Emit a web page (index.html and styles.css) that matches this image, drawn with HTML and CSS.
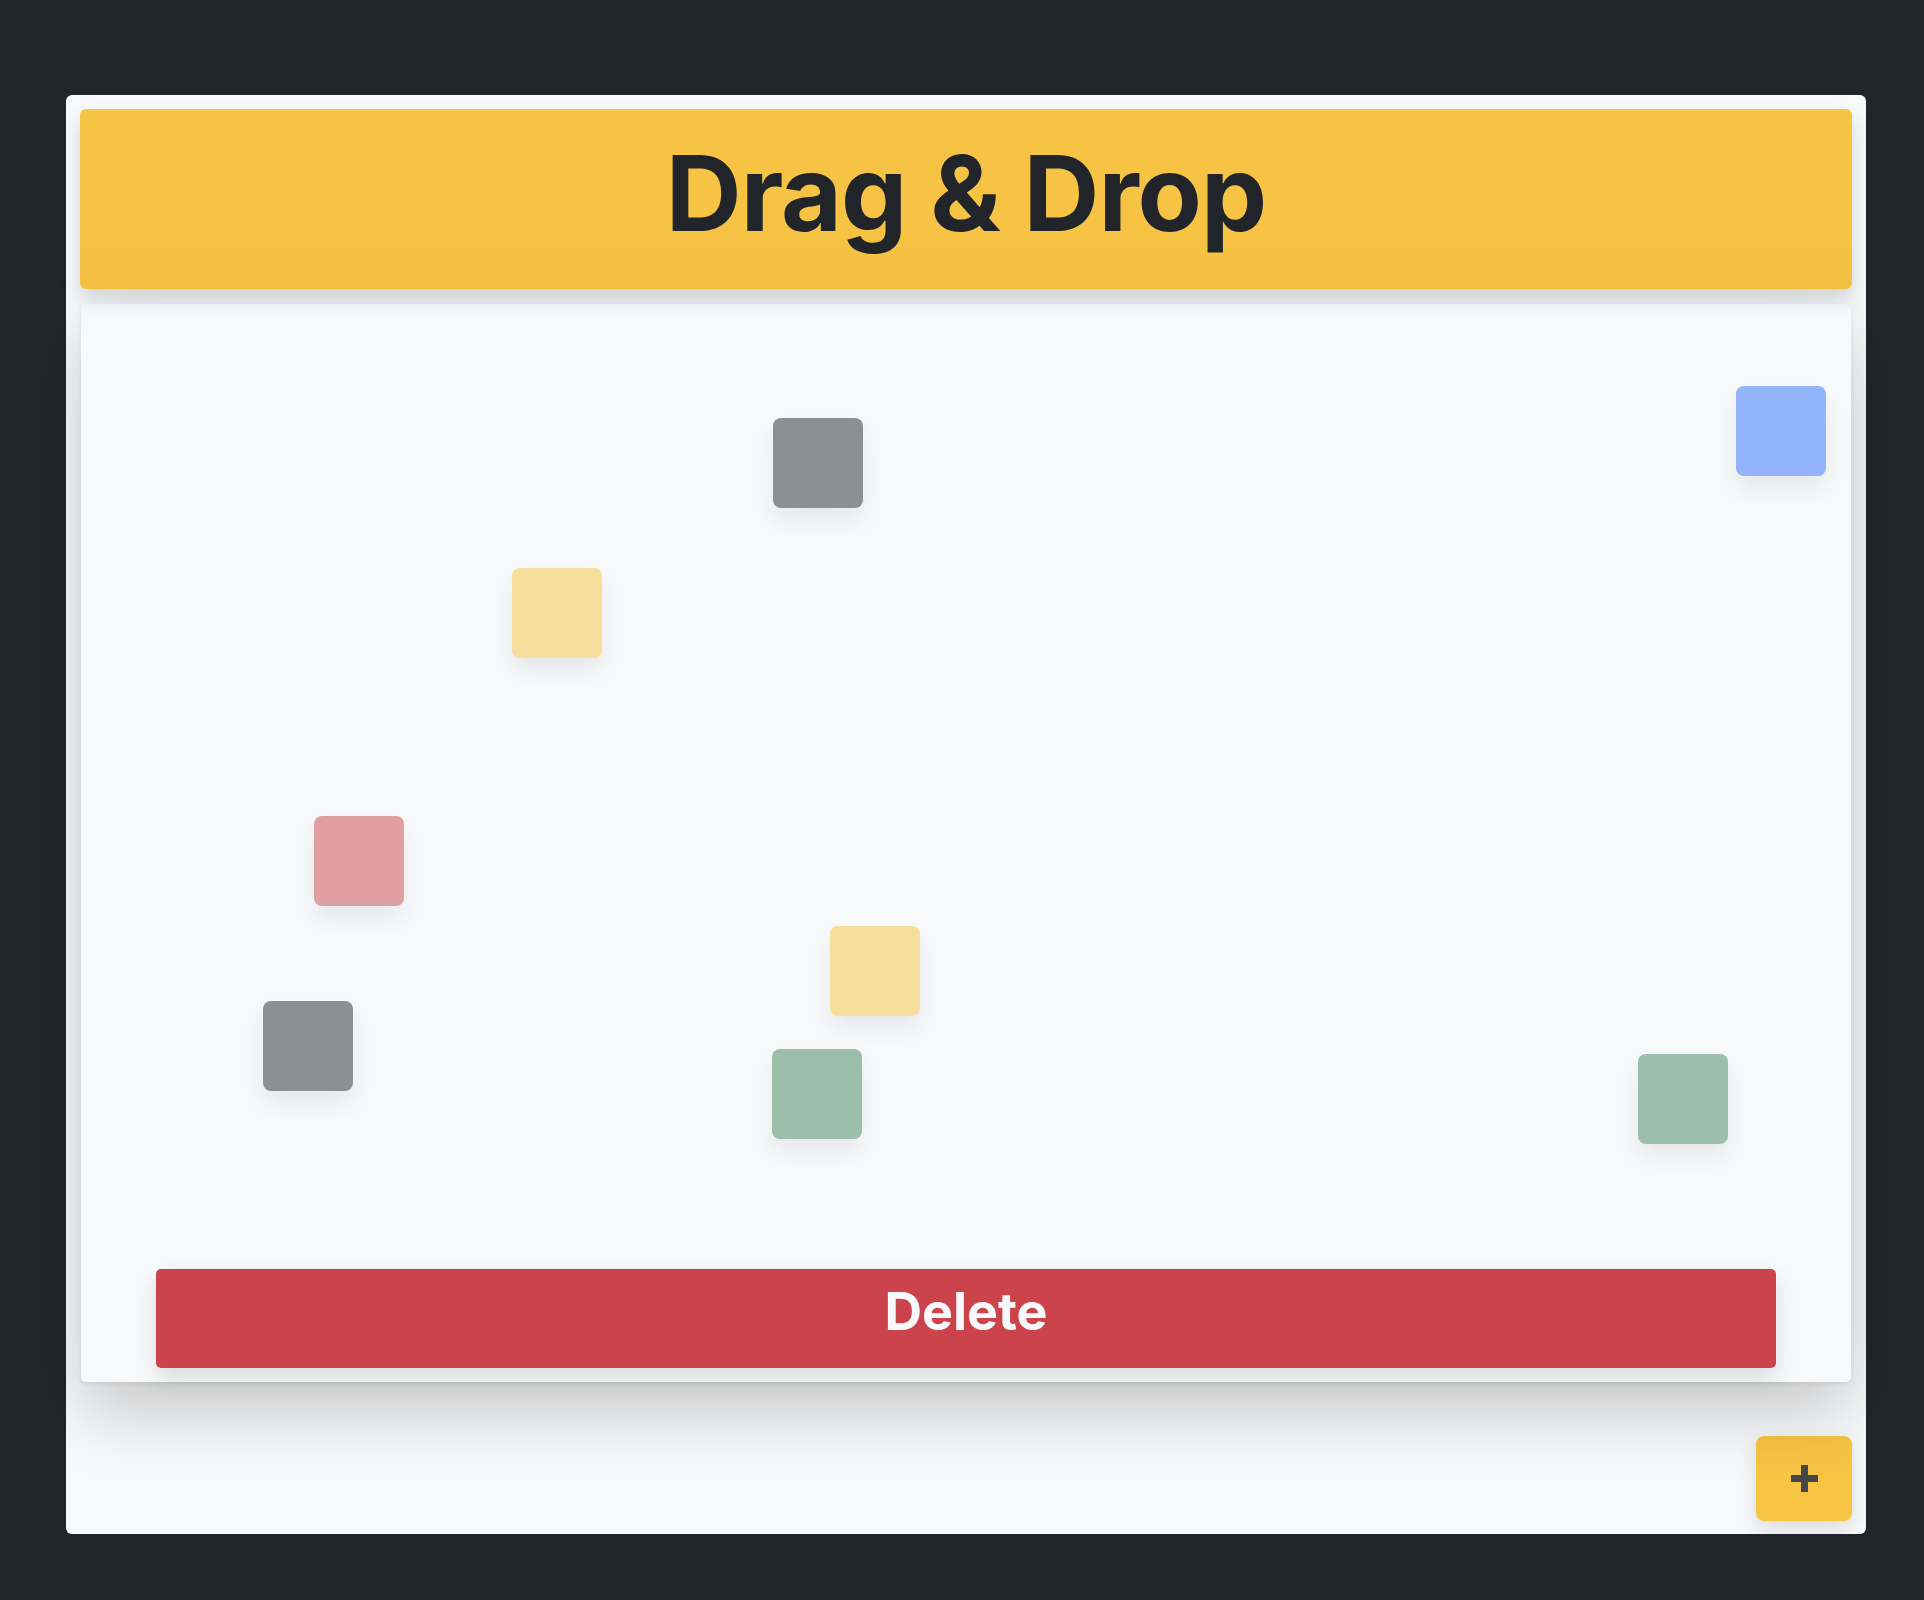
FILE: index.html
```html
<!DOCTYPE html>
<html lang="en">
<head>
<meta charset="utf-8">
<title>Drag &amp; Drop</title>
<link rel="stylesheet" href="styles.css">
</head>
<body>
<main class="app">
  <header class="title-bar">
    <h1 class="title">Drag &amp; Drop</h1>
  </header>
  <section class="board">
    <div class="box box-dark" style="left:692px;top:114px"></div>
    <div class="box box-blue" style="left:1655px;top:82px"></div>
    <div class="box box-yellow" style="left:431px;top:264px"></div>
    <div class="box box-red" style="left:233px;top:512px"></div>
    <div class="box box-yellow" style="left:749px;top:622px"></div>
    <div class="box box-dark" style="left:182px;top:697px"></div>
    <div class="box box-green" style="left:691px;top:745px"></div>
    <div class="box box-green" style="left:1557px;top:750px"></div>
    <button class="delete-btn" type="button">Delete</button>
  </section>
  <div class="footer-row">
    <button class="add-btn" type="button" aria-label="Add">
      <svg width="27" height="27" viewBox="0 0 27 27" aria-hidden="true">
        <rect x="0" y="10" width="27" height="7" fill="#45474a"/>
        <rect x="10" y="0" width="7" height="27" fill="#45474a"/>
      </svg>
    </button>
  </div>
</main>
</body>
</html>
```

FILE: styles.css
```css
* { box-sizing: border-box; }

html, body {
  margin: 0;
  padding: 0;
  background: #222529;
  font-family: Inter, "Noto Sans", "Liberation Sans", sans-serif;
}

body {
  padding: 95px 58px 66px 66px;
}

.app {
  width: 1800px;
  height: 1439px;
  background: #f8f9fa;
  border-radius: 6px;
  padding: 14px 14px 13px 14px;
  display: flex;
  flex-direction: column;
}

.title-bar {
  position: relative;
  z-index: 2;
  height: 180px;
  flex: none;
  background: linear-gradient(to bottom, #f6c445 0%, #f6c344 70%, #f3bf41 100%);
  border-radius: 6px;
  box-shadow: 0 10px 20px rgba(0, 0, 0, 0.15);
  display: flex;
  align-items: center;
  justify-content: center;
}

.title {
  margin: 0;
  font-size: 105px;
  font-weight: 700;
  color: #212529;
  letter-spacing: -1px;
  line-height: 1;
  padding-bottom: 14px;
}

.board {
  position: relative;
  z-index: 1;
  margin: 15px 1px 0 1px;
  height: 1078px;
  flex: none;
  background: #f8f9fa;
  border-radius: 5px;
  box-shadow: 0 30px 70px rgba(0, 0, 0, 0.2), 0 2px 5px rgba(0, 0, 0, 0.08);
  display: flex;
  flex-direction: column;
  justify-content: flex-end;
  padding: 0 75px 14px 75px;
}

.box {
  position: absolute;
  width: 90px;
  height: 90px;
  border-radius: 8px;
  box-shadow: 0 12px 22px rgba(0, 0, 0, 0.07);
}

.box-dark { background: #8e8f91; }
.box-blue { background: #93b3fa; }
.box-yellow { background: #f8de9c; }
.box-red { background: #e19fa3; }
.box-green { background: #9bbfaa; }

.delete-btn {
  height: 99px;
  width: 100%;
  border: none;
  border-radius: 5px;
  background: #cc444b;
  color: #f8f9fa;
  font-family: Inter, "Noto Sans", "Liberation Sans", sans-serif;
  font-size: 52px;
  font-weight: 700;
  box-shadow: 0 10px 22px rgba(0, 0, 0, 0.12);
  padding: 0 0 14px 0;
}

.footer-row {
  flex: 1;
  display: flex;
  justify-content: flex-end;
  align-items: flex-end;
}

.add-btn {
  width: 96px;
  height: 85px;
  border: none;
  border-radius: 8px;
  background: #f7c444;
  box-shadow: 0 8px 20px rgba(0, 0, 0, 0.12);
  display: flex;
  align-items: center;
  justify-content: center;
  padding: 0;
}
```
